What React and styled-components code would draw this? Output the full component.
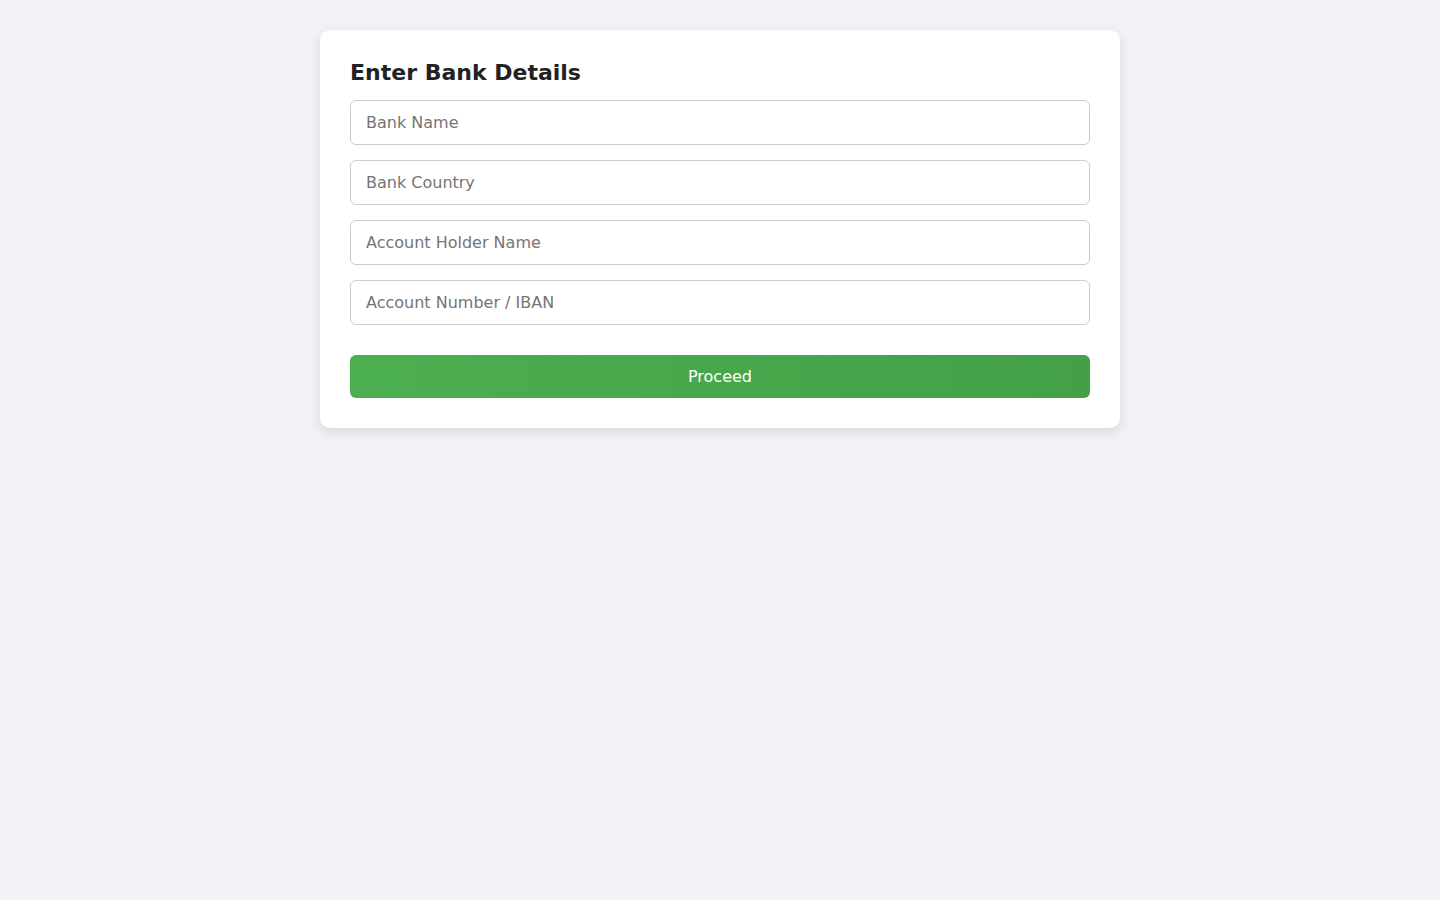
import styled, { createGlobalStyle } from "styled-components";

const GlobalStyle = createGlobalStyle`
  html, body {
    margin: 0;
    padding: 0;
    background: #f0f2f5;
    font-family: "DejaVu Sans", sans-serif;
  }
  * {
    box-sizing: border-box;
  }
`;

const Page = styled.div`
  min-height: 100vh;
  display: flex;
  justify-content: center;
  align-items: flex-start;
  padding-top: 30px;
`;

const Card = styled.form`
  width: 800px;
  background: #fff;
  border-radius: 10px;
  box-shadow: 0 4px 12px rgba(0, 0, 0, 0.1);
  padding: 30px;
  display: flex;
  flex-direction: column;
`;

const Title = styled.h2`
  margin: 0 0 14px;
  font-size: 22px;
  line-height: 26px;
  font-weight: bold;
  color: #222;
`;

const Fields = styled.div`
  display: flex;
  flex-direction: column;
  gap: 15px;
`;

const Input = styled.input`
  width: 100%;
  padding: 12px 15px;
  font-family: "DejaVu Sans", sans-serif;
  font-size: 16px;
  line-height: 19px;
  border: 1px solid #ccc;
  border-radius: 6px;
  color: #333;
  outline: none;

  &::placeholder {
    color: #757575;
  }
`;

const ProceedBtn = styled.button`
  margin-top: 30px;
  width: 100%;
  padding: 12px;
  font-family: "DejaVu Sans", sans-serif;
  font-size: 16px;
  line-height: 19px;
  color: #fff;
  border: none;
  border-radius: 6px;
  background: linear-gradient(90deg, #4caf50, #43a047);
  cursor: pointer;
`;

const fields = [
  "Bank Name",
  "Bank Country",
  "Account Holder Name",
  "Account Number / IBAN",
];

function App() {
  return (
    <>
      <GlobalStyle />
      <Page>
        <Card onSubmit={(e) => e.preventDefault()}>
          <Title>Enter Bank Details</Title>
          <Fields>
            {fields.map((f) => (
              <Input key={f} type="text" placeholder={f} />
            ))}
          </Fields>
          <ProceedBtn type="submit">Proceed</ProceedBtn>
        </Card>
      </Page>
    </>
  );
}

export default App;
